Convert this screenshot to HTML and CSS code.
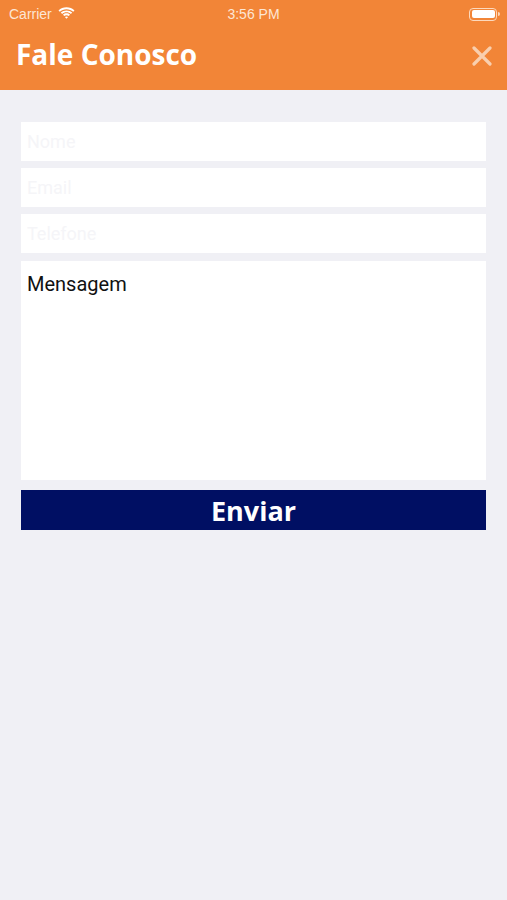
FILE: index.html
```html
<!DOCTYPE html>
<html lang="pt">
<head>
    <meta charset="UTF-8">
    <meta name="viewport" content="width=device-width, initial-scale=1.0">
    <title>Fale Conosco</title>
    <link rel="stylesheet" href="styles.css">
</head>
<body>
    <header>
        <div class="status-bar">
            <div class="carrier">
                Carrier
                <svg class="wifi" width="17" height="12" viewBox="0 0 17 12">
                    <path d="M8.5 2.2c2.6 0 4.9 1 6.7 2.6l1.3-1.4C14.4 1.5 11.6.3 8.5.3S2.6 1.5.5 3.4l1.3 1.4C3.6 3.2 5.9 2.2 8.5 2.2z" fill="#fff"/>
                    <path d="M8.5 5.3c1.7 0 3.2.6 4.4 1.7l1.3-1.4C12.7 4.2 10.7 3.4 8.5 3.4S4.3 4.2 2.8 5.6l1.3 1.4c1.2-1.1 2.7-1.7 4.4-1.7z" fill="#fff"/>
                    <path d="M8.5 8.3c.9 0 1.6.3 2.2.8l1.3-1.4c-1-.9-2.2-1.4-3.5-1.4s-2.5.5-3.5 1.4l1.3 1.4c.6-.5 1.3-.8 2.2-.8zM8.5 11.7l1.6-1.7c-.4-.4-1-.6-1.6-.6s-1.2.2-1.6.6z" fill="#fff"/>
                </svg>
            </div>
            <div class="clock">3:56 PM</div>
            <div class="battery"><span></span></div>
        </div>
        <div class="title-bar">
            <h1>Fale Conosco</h1>
            <svg class="close" width="20" height="20" viewBox="0 0 20 20">
                <path d="M2 2L18 18M18 2L2 18" stroke="#f9cfae" stroke-width="3.2" stroke-linecap="round"/>
            </svg>
        </div>
    </header>

    <main>
        <form class="contact-form">
            <input type="text" placeholder="Nome">
            <input type="email" placeholder="Email">
            <input type="text" placeholder="Telefone">
            <textarea placeholder="Mensagem"></textarea>
            <button type="submit">Enviar</button>
        </form>
    </main>
</body>
</html>
```

FILE: styles.css
```css
* {
    margin: 0;
    padding: 0;
    box-sizing: border-box;
}

body {
    font-family: Roboto, "Liberation Sans", sans-serif;
    background-color: #f0f0f5;
    min-height: 900px;
}

header {
    background-color: #f28537;
    height: 90px;
    color: white;
}

.status-bar {
    height: 28px;
    display: flex;
    align-items: center;
    justify-content: space-between;
    padding: 0 9px 0 9px;
    font-family: "Liberation Sans", Arial, sans-serif;
    font-size: 14px;
    position: relative;
}

.carrier {
    display: flex;
    align-items: center;
    gap: 6px;
    color: #fde6d4;
}

.wifi {
    margin-top: -3px;
}

.clock {
    position: absolute;
    left: 0;
    right: 0;
    text-align: center;
    font-weight: 500;
    color: #fde6d4;
}

.battery {
    width: 28px;
    height: 13px;
    border: 1.5px solid #fcd9bd;
    border-radius: 4px;
    padding: 1.5px;
    margin-right: 1px;
    position: relative;
}

.battery::after {
    content: "";
    position: absolute;
    right: -4px;
    top: 3px;
    width: 2px;
    height: 4px;
    background: #fcd9bd;
    border-radius: 0 2px 2px 0;
}

.battery span {
    display: block;
    height: 100%;
    background: white;
    border-radius: 2px;
}

.title-bar {
    height: 62px;
    display: flex;
    align-items: center;
    justify-content: space-between;
    padding: 0 15px 10px 16px;
}

.title-bar h1 {
    font-family: "Open Sans", sans-serif;
    font-size: 28px;
    font-weight: 700;
    letter-spacing: 0;
}

.close {
    margin-top: 4px;
}

main {
    padding: 32px 21px 0 21px;
}

.contact-form {
    display: flex;
    flex-direction: column;
    gap: 7px;
}

input[type="text"],
input[type="email"],
textarea {
    width: 100%;
    border: none;
    background: white;
    font-family: Roboto, sans-serif;
    font-size: 18px;
    outline: none;
}

input[type="text"],
input[type="email"] {
    height: 39px;
    padding: 0 6px;
}

input::placeholder {
    color: #f5f5f8;
}

textarea {
    height: 219px;
    margin-top: 1px;
    padding: 11px 6px;
    resize: none;
    color: #111;
    font-size: 20px;
}

textarea::placeholder {
    color: #111;
}

button[type="submit"] {
    margin-top: 3px;
    height: 40px;
    border: none;
    background-color: #000f63;
    color: white;
    font-family: "Open Sans", sans-serif;
    font-size: 27px;
    font-weight: 700;
    cursor: pointer;
}
```
